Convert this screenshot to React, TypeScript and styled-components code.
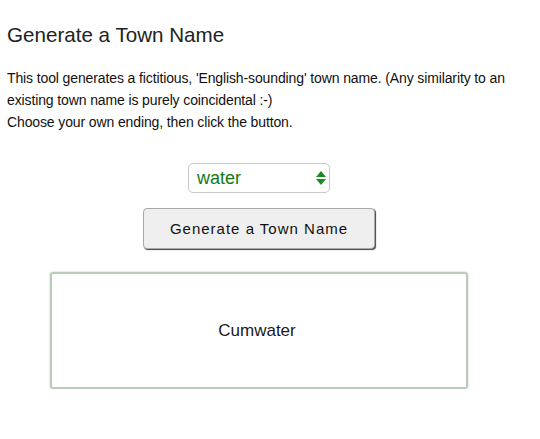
import React, { useState } from "react";
import styled, { createGlobalStyle } from "styled-components";

const Global = createGlobalStyle`
  html, body { margin: 0; padding: 0; background: #fff; }
  body { font-family: "Liberation Sans", Arial, Helvetica, sans-serif; color: #222; }
`;

const Page = styled.div`
  width: 504px;
  padding: 23px 0 0 7px;
`;

const Title = styled.h1`
  margin: 0;
  font-size: 20.6px;
  line-height: 24px;
  font-weight: normal;
  color: #222;
`;

const Intro = styled.p`
  margin: 20px 0 0;
  font-size: 14px;
  line-height: 22px;
  letter-spacing: -0.12px;
  color: #111;
  width: 520px;
`;

const Controls = styled.div`
  display: flex;
  flex-direction: column;
  align-items: center;
  margin-top: 30px;
`;

const SelectWrap = styled.div`
  position: relative;
  width: 142px;
  height: 30px;
`;

const Select = styled.select`
  appearance: none;
  -webkit-appearance: none;
  width: 100%;
  height: 100%;
  box-sizing: border-box;
  border: 1px solid #c9c9c9;
  border-radius: 5px;
  background: #fff;
  color: #137a13;
  font-family: "Liberation Sans", Arial, sans-serif;
  font-size: 18px;
  padding: 0 0 0 8px;
  outline: none;
`;

const Arrows = styled.svg`
  position: absolute;
  right: 4px;
  top: 8px;
  pointer-events: none;
`;

const Button = styled.button`
  margin-top: 15px;
  width: 232px;
  height: 41px;
  box-sizing: border-box;
  background: #efefef;
  border: 1px solid #a9a9a9;
  border-radius: 4px;
  box-shadow: 1px 1px 1px #444;
  font-family: "Liberation Sans", Arial, sans-serif;
  font-size: 15px;
  letter-spacing: 1px;
  color: #111;
  cursor: pointer;
`;

const Result = styled.div`
  margin-top: 23px;
  width: 418px;
  height: 117px;
  box-sizing: border-box;
  border: 2px solid #b9cdb9;
  border-radius: 3px;
  box-shadow: 0 0 2px rgba(0, 0, 0, 0.25);
  display: flex;
  align-items: center;
  justify-content: center;
  padding-right: 4px;
  font-size: 17px;
  color: #1a1a1a;
`;

const endings = ["water", "ton", "ford", "bury", "ham", "ley", "by", "field", "wick", "stead"];

export default function App() {
  const [ending, setEnding] = useState("water");
  const [name, setName] = useState("Cumwater");
  const prefixes = ["Cum", "Ash", "Brad", "Hol", "Mar", "Stan", "Wes"];
  return (
    <>
      <Global />
      <Page>
        <Title>Generate a Town Name</Title>
        <Intro>
          This tool generates a fictitious, 'English-sounding' town name. (Any similarity to an
          existing town name is purely coincidental :-)
          <br />
          Choose your own ending, then click the button.
        </Intro>
        <Controls>
          <SelectWrap>
            <Select value={ending} onChange={(e) => setEnding(e.target.value)}>
              {endings.map((x) => (
                <option key={x} value={x}>
                  {x}
                </option>
              ))}
            </Select>
            <Arrows width="10" height="14" viewBox="0 0 10 14">
              <polygon points="5,0 10,6 0,6" fill="#1d8a1d" />
              <polygon points="0,8 10,8 5,14" fill="#1d8a1d" />
            </Arrows>
          </SelectWrap>
          <Button
            onClick={() =>
              setName(prefixes[Math.floor(Math.random() * prefixes.length)] + ending)
            }
          >
            Generate a Town Name
          </Button>
          <Result>{name}</Result>
        </Controls>
      </Page>
    </>
  );
}
